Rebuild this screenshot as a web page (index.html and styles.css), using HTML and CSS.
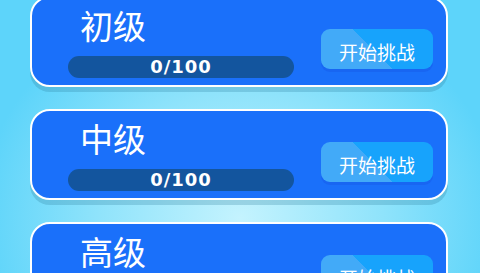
FILE: index.html
```html
<!DOCTYPE html>
<html lang="zh">
<head>
<meta charset="utf-8">
<link rel="stylesheet" href="styles.css">
</head>
<body>
<div class="list">
  <div class="card">
    <div class="info">
      <div class="title">初级</div>
      <div class="bar"><span>0/100</span></div>
    </div>
    <div class="btn">开始挑战</div>
  </div>
  <div class="card">
    <div class="info">
      <div class="title">中级</div>
      <div class="bar"><span>0/100</span></div>
    </div>
    <div class="btn">开始挑战</div>
  </div>
  <div class="card">
    <div class="info">
      <div class="title">高级</div>
      <div class="bar"><span>0/100</span></div>
    </div>
    <div class="btn">开始挑战</div>
  </div>
</div>
</body>
</html>
```
FILE: styles.css
```css
html, body {
  margin: 0;
  padding: 0;
  width: 480px;
  height: 273px;
  overflow: hidden;
}
body {
  background: radial-gradient(ellipse 260px 230px at 50% 80%, #c4f3fe 0%, #8fe3fb 55%, #5dd4fa 100%);
  font-family: "Noto Sans CJK SC", "Noto Sans", sans-serif;
}
.list {
  display: flex;
  flex-direction: column;
  gap: 22px;
  margin-top: -4px;
  padding-left: 30px;
}
.card {
  box-sizing: border-box;
  width: 418px;
  height: 91px;
  border: 2px solid #ffffff;
  border-radius: 20px;
  background: #1a70fa;
  box-shadow: 0 5px 0 rgba(40, 120, 150, 0.25);
  display: flex;
  justify-content: space-between;
  align-items: flex-start;
}
.info {
  padding-left: 36px;
  display: flex;
  flex-direction: column;
}
.title {
  margin-top: 11px;
  margin-left: 12px;
  font-size: 33px;
  line-height: 32px;
  color: #ffffff;
}
.bar {
  margin-top: 15px;
  width: 226px;
  height: 22px;
  border-radius: 11px;
  background: #13559e;
  display: flex;
  align-items: center;
  justify-content: center;
}
.bar span {
  font-family: "DejaVu Sans", sans-serif;
  font-weight: bold;
  font-size: 18px;
  letter-spacing: 1px;
  line-height: 22px;
  color: #ffffff;
}
.btn {
  margin-top: 31px;
  margin-right: 13px;
  width: 112px;
  height: 40px;
  border-radius: 9px;
  background: linear-gradient(45deg, #42aaf8 0%, #42aaf8 47%, #17a3fc 47%, #17a3fc 100%);
  box-shadow: 0 3px 0 #1866f2;
  color: #ffffff;
  font-size: 19px;
  line-height: 40px;
  padding-top: 3px;
  box-sizing: border-box;
  text-align: center;
}
```
